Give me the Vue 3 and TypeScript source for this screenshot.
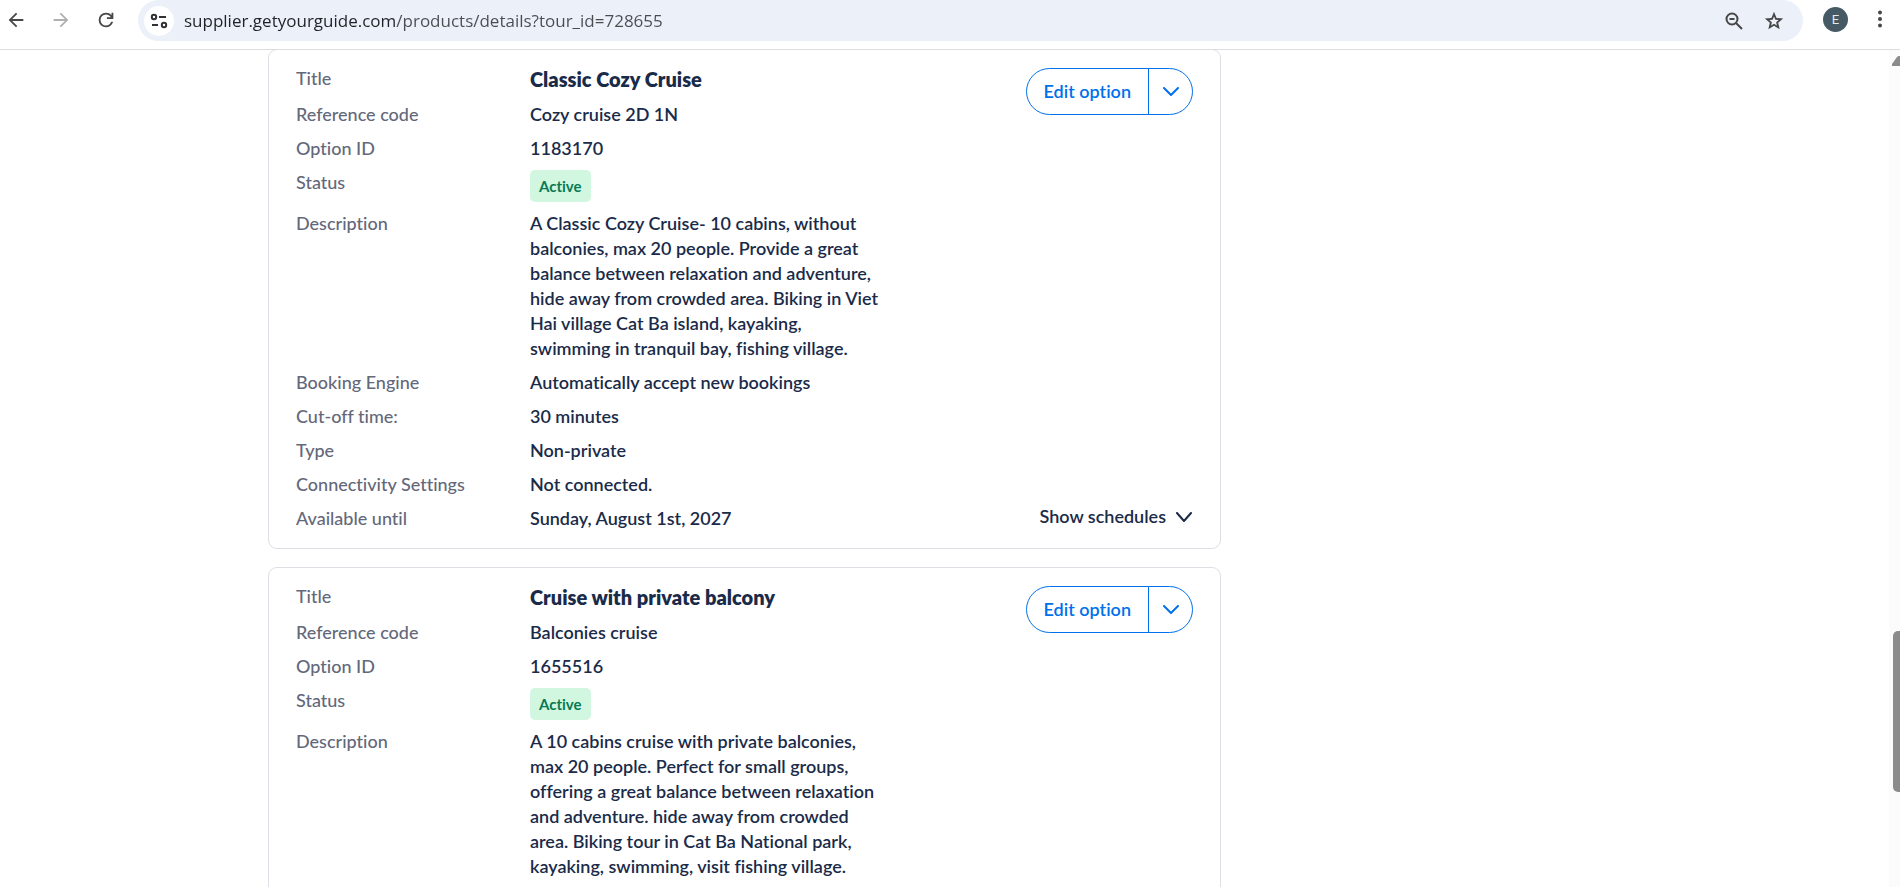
<script setup lang="ts">
import { ref } from 'vue'

interface Detail {
  label: string
  value: string
  kind?: 'title' | 'badge'
}

interface TourOption {
  id: string
  details: Detail[]
  schedules: boolean
}

const url = ref('supplier.getyourguide.com/products/details?tour_id=728655')

const options: TourOption[] = [
  {
    id: '1183170',
    schedules: true,
    details: [
      { label: 'Title', value: 'Classic Cozy Cruise', kind: 'title' },
      { label: 'Reference code', value: 'Cozy cruise 2D 1N' },
      { label: 'Option ID', value: '1183170' },
      { label: 'Status', value: 'Active', kind: 'badge' },
      {
        label: 'Description',
        value:
          'A Classic Cozy Cruise- 10 cabins, without\nbalconies, max 20 people. Provide a great\nbalance between relaxation and adventure,\nhide away from crowded area. Biking in Viet\nHai village Cat Ba island, kayaking,\nswimming in tranquil bay, fishing village.',
      },
      { label: 'Booking Engine', value: 'Automatically accept new bookings' },
      { label: 'Cut-off time:', value: '30 minutes' },
      { label: 'Type', value: 'Non-private' },
      { label: 'Connectivity Settings', value: 'Not connected.' },
      { label: 'Available until', value: 'Sunday, August 1st, 2027' },
    ],
  },
  {
    id: '1655516',
    schedules: false,
    details: [
      { label: 'Title', value: 'Cruise with private balcony', kind: 'title' },
      { label: 'Reference code', value: 'Balconies cruise' },
      { label: 'Option ID', value: '1655516' },
      { label: 'Status', value: 'Active', kind: 'badge' },
      {
        label: 'Description',
        value:
          'A 10 cabins cruise with private balconies,\nmax 20 people. Perfect for small groups,\noffering a great balance between relaxation\nand adventure. hide away from crowded\narea. Biking tour in Cat Ba National park,\nkayaking, swimming, visit fishing village.',
      },
    ],
  },
]
</script>

<template>
  <div class="window">
    <header class="toolbar">
      <nav class="history">
        <button class="icon-button" type="button" aria-label="Back">
          <svg width="22" height="22" viewBox="0 0 24 24"><path d="M7.825 13l5.6 5.6L12 20l-8-8 8-8 1.425 1.4L7.825 11H20v2z" /></svg>
        </button>
        <button class="icon-button faded" type="button" aria-label="Forward">
          <svg width="22" height="22" viewBox="0 0 24 24"><path d="M16.175 13l-5.6 5.6L12 20l8-8-8-8-1.425 1.4 5.6 5.6H4v2z" /></svg>
        </button>
        <button class="icon-button" type="button" aria-label="Reload">
          <svg width="22" height="22" viewBox="0 0 24 24"><path d="M12 20q-3.35 0-5.675-2.325T4 12t2.325-5.675T12 4q1.725 0 3.3.712T18 6.75V4h2v7h-7V9h4.2q-.8-1.4-2.187-2.2T12 6Q9.5 6 7.75 7.75T6 12t1.75 4.25T12 18q1.925 0 3.475-1.1T17.65 14h2.1q-.7 2.65-2.85 4.325T12 20" /></svg>
        </button>
      </nav>
      <div class="omnibox">
        <button class="site-info" type="button" aria-label="Site information">
          <svg width="20" height="20" viewBox="0 0 20 20" fill="none" stroke="#303134" stroke-width="2">
            <circle cx="5" cy="6" r="2.2" /><path d="M10 6h7M3 14h6" /><circle cx="15" cy="14" r="2.2" />
          </svg>
        </button>
        <input v-model="url" class="address" type="text" aria-label="Address" spellcheck="false" />
        <button class="icon-button" type="button" aria-label="Zoom">
          <svg width="20" height="20" viewBox="0 0 20 20" fill="none" stroke="#474747" stroke-width="2">
            <circle cx="8" cy="8" r="5.5" /><path d="M12 12l6 6M5.5 8h5" />
          </svg>
        </button>
        <button class="icon-button" type="button" aria-label="Bookmark">
          <svg width="22" height="22" viewBox="0 0 24 24"><path d="M8.85 16.825l3.15-1.9 3.15 1.925-.825-3.6 2.775-2.4-3.65-.325L12 7.125l-1.45 3.375-3.65.325 2.775 2.425zM5.825 21l1.625-7.025L2 9.25l7.2-.625L12 2l2.8 6.625 7.2.625-5.45 4.725L18.175 21 12 17.275z" /></svg>
        </button>
      </div>
      <button class="avatar" type="button" aria-label="Profile">E</button>
      <button class="icon-button menu" type="button" aria-label="Menu">
        <svg width="6" height="20" viewBox="0 0 6 20"><circle cx="3" cy="3.5" r="2" /><circle cx="3" cy="10" r="2" /><circle cx="3" cy="16.5" r="2" /></svg>
      </button>
    </header>

    <div class="viewport">
      <main class="options">
        <article v-for="option in options" :key="option.id" class="card">
          <dl class="details">
            <div v-for="row in option.details" :key="row.label" class="row">
              <dt>{{ row.label }}</dt>
              <dd :class="row.kind">
                <span v-if="row.kind === 'badge'" class="status">{{ row.value }}</span>
                <template v-else>{{ row.value }}</template>
              </dd>
            </div>
          </dl>
          <div class="actions">
            <div class="split-button">
              <button class="edit" type="button">Edit option</button>
              <button class="more" type="button" aria-label="More actions">
                <svg width="16" height="10" viewBox="0 0 16 10" fill="none" stroke="currentColor" stroke-width="2" stroke-linecap="round" stroke-linejoin="round"><path d="M1 1l7 7 7-7" /></svg>
              </button>
            </div>
            <button v-if="option.schedules" class="schedules" type="button">
              Show schedules
              <svg width="18" height="10" viewBox="0 0 18 10" fill="none" stroke="currentColor" stroke-width="2" stroke-linecap="round" stroke-linejoin="round"><path d="M2 1l7 8 7-8" /></svg>
            </button>
          </div>
        </article>
      </main>
      <div class="scrollbar">
        <svg class="arrow" width="8" height="10" viewBox="0 0 8 10"><path d="M0 10V8L5 1q1-1 2-1h1v10z" fill="#8b8b8b" /></svg>
        <div class="thumb"></div>
      </div>
    </div>
  </div>
</template>

<style>
body {
  margin: 0;
  background: #fff;
}
</style>

<style scoped>
.window {
  display: flex;
  flex-direction: column;
  height: 100vh;
  overflow: hidden;
  color: #1a2b49;
  font-family: Lato, 'Liberation Sans', sans-serif;
  font-size: 18px;
  font-weight: 500;
  font-variant-ligatures: none;
  line-height: 25px;
}

button {
  padding: 0;
  border: 0;
  background: none;
  color: inherit;
  font: inherit;
  cursor: pointer;
}

svg {
  display: block;
}

.toolbar {
  position: relative;
  display: flex;
  align-items: flex-start;
  height: 49px;
  flex: none;
  background: #fff;
  box-shadow: 0 1px 0 #dcdde0;
  z-index: 1;
}

.history {
  display: flex;
  align-items: center;
  gap: 23px;
  height: 39px;
  padding: 0 21px 0 5px;
}

.icon-button {
  fill: #474747;
}

.faded {
  fill: #b0b0b0;
}

.omnibox {
  display: flex;
  align-items: center;
  flex: 1;
  gap: 19px;
  height: 41px;
  padding: 0 18px 0 6px;
  box-sizing: border-box;
  border-radius: 21px;
  background: #ebf0f9;
}

.site-info {
  display: grid;
  place-items: center;
  width: 30px;
  height: 30px;
  margin-right: -9px;
  border-radius: 50%;
  background: #fff;
}

.address {
  flex: 1;
  min-width: 0;
  padding: 0;
  border: 0;
  outline: 0;
  background: linear-gradient(90deg, #202124 212px, #4a4c50 212px);
  background-clip: text;
  color: transparent;
  font: 400 17px/24px 'Open Sans', 'Noto Sans', sans-serif;
}

.avatar {
  width: 25px;
  height: 25px;
  margin: 7px 29px 0 20px;
  border-radius: 50%;
  background: #455a64;
  color: #e4eaed;
  font: 400 13px/25px Roboto, sans-serif;
}

.menu {
  margin: 9px 17px 0 0;
}

.viewport {
  display: flex;
  justify-content: space-between;
  flex: 1;
  min-height: 0;
}

.options {
  display: flex;
  flex-direction: column;
  flex: 0 1 953px;
  gap: 18px;
  margin-left: 268px;
}

.card {
  display: flex;
  justify-content: space-between;
  flex: none;
  padding: 16px 27px 17px;
  border: 1px solid #dcdfe4;
  border-radius: 9px;
}

.details {
  display: flex;
  flex-direction: column;
  gap: 9px;
  margin: 0;
}

.row {
  display: grid;
  grid-template-columns: 234px 1fr;
}

dt {
  color: #63687a;
}

dd {
  margin: 0;
  font-weight: 600;
  white-space: pre-line;
}

.title {
  font-size: 20px;
  font-weight: 800;
  line-height: 27px;
}

.status {
  display: block;
  width: max-content;
  padding: 0 9px;
  border-radius: 5px;
  background: #d1f7e1;
  color: #077a53;
  font-size: 15px;
  font-weight: 700;
  line-height: 32px;
}

.actions {
  display: flex;
  flex-direction: column;
  align-items: flex-end;
  justify-content: space-between;
  padding: 2px 0;
}

.split-button {
  display: flex;
  height: 47px;
  box-sizing: border-box;
  border: 1px solid #0071eb;
  border-radius: 24px;
  color: #0071eb;
  font-weight: 600;
}

.edit {
  padding: 0 17px;
}

.more {
  display: grid;
  place-items: center;
  width: 44px;
  border-left: 1px solid #0071eb;
}

.schedules {
  display: flex;
  align-items: center;
  gap: 9px;
  font-weight: 600;
}

.scrollbar {
  position: relative;
  width: 11px;
  background: #fbfbfb;
}

.arrow {
  margin: 7px 0 0 3px;
}

.thumb {
  position: absolute;
  top: 69.5%;
  right: 0;
  width: 7px;
  height: 19.2%;
  border-radius: 5px 0 0 5px;
  background: #8b8b8b;
}
</style>
